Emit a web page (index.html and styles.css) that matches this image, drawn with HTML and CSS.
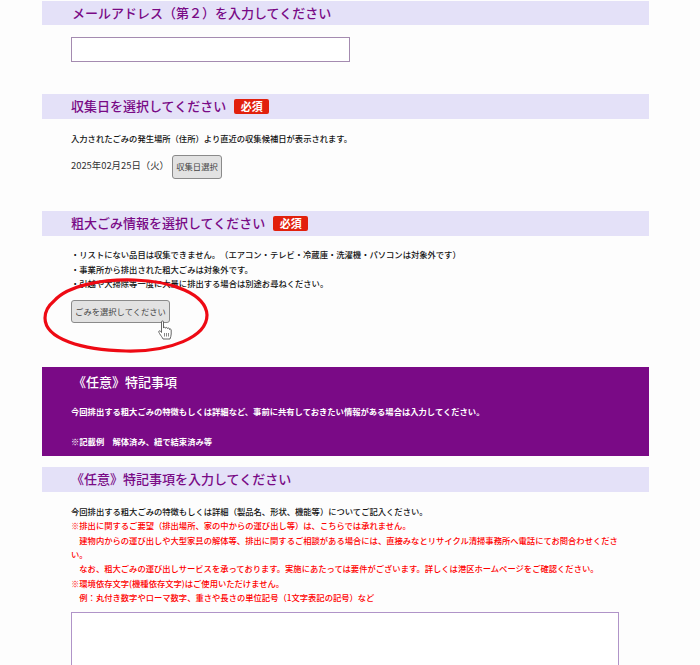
FILE: index.html
```html
<!DOCTYPE html>
<html lang="ja">
<head>
    <meta charset="UTF-8">
    <meta name="viewport" content="width=device-width, initial-scale=1.0">
    <title>粗大ごみ受付</title>
    <link rel="stylesheet" href="styles.css">
</head>
<body>
    <div class="container">
        <h2 class="bar bar-first">メールアドレス（第２）を入力してください</h2>
        <div class="body-block">
            <input type="text" class="mail-input">
        </div>

        <h2 class="bar bar-date">収集日を選択してください<span class="required">必須</span></h2>
        <div class="body-block">
            <p class="note date-note">入力されたごみの発生場所（住所）より直近の収集候補日が表示されます。</p>
            <div class="date-row">
                <span class="date-text">2025年02月25日（火）</span>
                <button class="btn btn-date">収集日選択</button>
            </div>
        </div>

        <h2 class="bar bar-item">粗大ごみ情報を選択してください<span class="required">必須</span></h2>
        <div class="body-block">
            <p class="note list-note">・リストにない品目は収集できません。（エアコン・テレビ・冷蔵庫・洗濯機・パソコンは対象外です）</p>
            <p class="note list-note">・事業所から排出された粗大ごみは対象外です。</p>
            <p class="note list-note">・引越や大掃除等一度に大量に排出する場合は別途お尋ねください。</p>
            <div class="pick-wrap">
                <button class="btn btn-pick">ごみを選択してください</button>
                <svg class="circle-mark" width="170" height="78" viewBox="0 0 170 78">
                    <path d="M12 24C26 8 62 2 92 3C130 4 164 17 165 38C165 60 128 75 84 74C40 73 3 62 3 41C3 35 6 29 12 24Z" fill="none" stroke="#ee0a14" stroke-width="3.2"/>
                </svg>
                <svg class="hand" width="14" height="20" viewBox="0 0 14 20">
                    <path d="M3.5 1.8C3.5 .7 5.5 .7 5.5 1.8V8C5.5 7 7.500 7 7.500 8.200C7.500 7.200 9.500 7.200 9.500 8.500C9.500 7.700 11.500 7.800 11.500 9V9.500C11.500 8.700 13.200 8.800 13.200 10V14C13.200 16 12.500 17 12 19H5C4.500 17.500 3 16 1.500 13.500C.5 12 .6 10.800 1.500 10.800C2.300 10.800 3 11.800 3.500 12.500Z" fill="#fff" stroke="#555" stroke-width=".9" stroke-linejoin="round"/>
                    <path d="M6.500 13V16.500M8.500 13V16.500M10.500 13V16.500" stroke="#555" stroke-width=".7" fill="none"/>
                </svg>
            </div>
        </div>

        <div class="notice">
            <h3 class="notice-title">《任意》特記事項</h3>
            <p class="notice-text">今回排出する粗大ごみの特徴もしくは詳細など、事前に共有しておきたい情報がある場合は入力してください。</p>
            <p class="notice-text notice-example">※記載例　解体済み、紐で結束済み等</p>
        </div>

        <h2 class="bar bar-memo">《任意》特記事項を入力してください</h2>
        <div class="body-block">
            <p class="note">今回排出する粗大ごみの特徴もしくは詳細（製品名、形状、機能等）についてご記入ください。</p>
            <p class="note red">※排出に関するご要望（排出場所、家の中からの運び出し等）は、こちらでは承れません。</p>
            <p class="note red">　建物内からの運び出しや大型家具の解体等、排出に関するご相談がある場合には、直接みなとリサイクル清掃事務所へ電話にてお問合わせください。</p>
            <p class="note red">　なお、粗大ごみの運び出しサービスを承っております。実施にあたっては要件がございます。詳しくは港区ホームページをご確認ください。</p>
            <p class="note red">※環境依存文字(機種依存文字)はご使用いただけません。</p>
            <p class="note red">　例：丸付き数字やローマ数字、重さや長さの単位記号（1文字表記の記号）など</p>
            <textarea class="memo"></textarea>
        </div>
    </div>
</body>
</html>
```

FILE: styles.css
```css
html, body {
    height: 665px;
    overflow: hidden;
}
body {
    margin: 0;
    padding: 0;
    background-color: #fdfdfd;
    font-family: "Noto Sans CJK JP", "Liberation Sans", sans-serif;
    color: #111;
    text-spacing-trim: space-all;
}
.container {
    width: 607px;
    margin-left: 42px;
    padding-top: 1px;
}
.bar {
    display: flex;
    align-items: center;
    height: 25px;
    margin: 0;
    padding-left: 29px;
    padding-bottom: 2px;
    box-sizing: border-box;
    background-color: #e4e1f8;
    color: #790a86;
    font-size: 13px;
    font-weight: 500;
}
.bar-first {
    height: 24px;
    padding-left: 30px;
}
.bar-date {
    margin-top: 32px;
}
.bar-item {
    margin-top: 32px;
}
.bar-memo {
    margin-top: 11px;
}
.required {
    margin-left: 8px;
    width: 35px;
    height: 15px;
    line-height: 15px;
    background-color: #e2200c;
    border-radius: 2px;
    color: #fff;
    font-size: 11px;
    font-weight: 700;
    text-align: center;
    position: relative;
    top: 1px;
}
.body-block {
    padding-left: 29px;
}
.mail-input {
    display: block;
    box-sizing: border-box;
    width: 279px;
    height: 25px;
    margin-top: 12px;
    border: 1px solid #a48bb0;
    background-color: #fff;
}
.note {
    margin: 0;
    width: 551px;
    font-size: 8.3px;
    font-weight: 500;
    line-height: 14.3px;
}
.red {
    color: #f00;
}
.date-note {
    margin-top: 12px;
}
.date-row {
    display: flex;
    align-items: center;
    margin-top: 10px;
}
.date-text {
    width: 101px;
    font-size: 9.4px;
    color: #333;
    line-height: 20px;
    align-self: flex-start;
    white-space: nowrap;
}
.btn {
    box-sizing: border-box;
    padding: 0 0 2px;
    background-color: #e2e2e2;
    border: 1px solid #8a8a8a;
    border-radius: 3px;
    color: #444;
    font-family: inherit;
    font-size: 8.3px;
}
.btn-date {
    width: 50px;
    height: 24px;
}
.list-note:first-child {
    margin-top: 11px;
}
.pick-wrap {
    position: relative;
    margin-top: 10px;
    height: 23px;
}
.btn-pick {
    display: block;
    width: 99px;
    height: 23px;
}
.circle-mark {
    position: absolute;
    left: -29px;
    top: -23px;
}
.hand {
    position: absolute;
    left: 87px;
    top: 20px;
}
.notice {
    box-sizing: border-box;
    height: 89px;
    margin-top: 44px;
    padding: 5px 0 0 29px;
    background-color: #7a0a86;
    color: #fff;
}
.notice-title {
    margin: 0;
    padding-left: 2px;
    font-size: 13px;
    font-weight: 500;
    line-height: 19px;
}
.notice-text {
    margin: 0;
    font-size: 8.3px;
    font-weight: 700;
    line-height: 14px;
}
.notice-title + .notice-text {
    margin-top: 13px;
}
.notice-example {
    margin-top: 16px;
}
.bar-memo + .body-block .note:first-child {
    margin-top: 12px;
}
.memo {
    display: block;
    box-sizing: border-box;
    width: 548px;
    height: 120px;
    margin-top: 8px;
    border: 1px solid #b094c8;
    background-color: #fff;
}
```
